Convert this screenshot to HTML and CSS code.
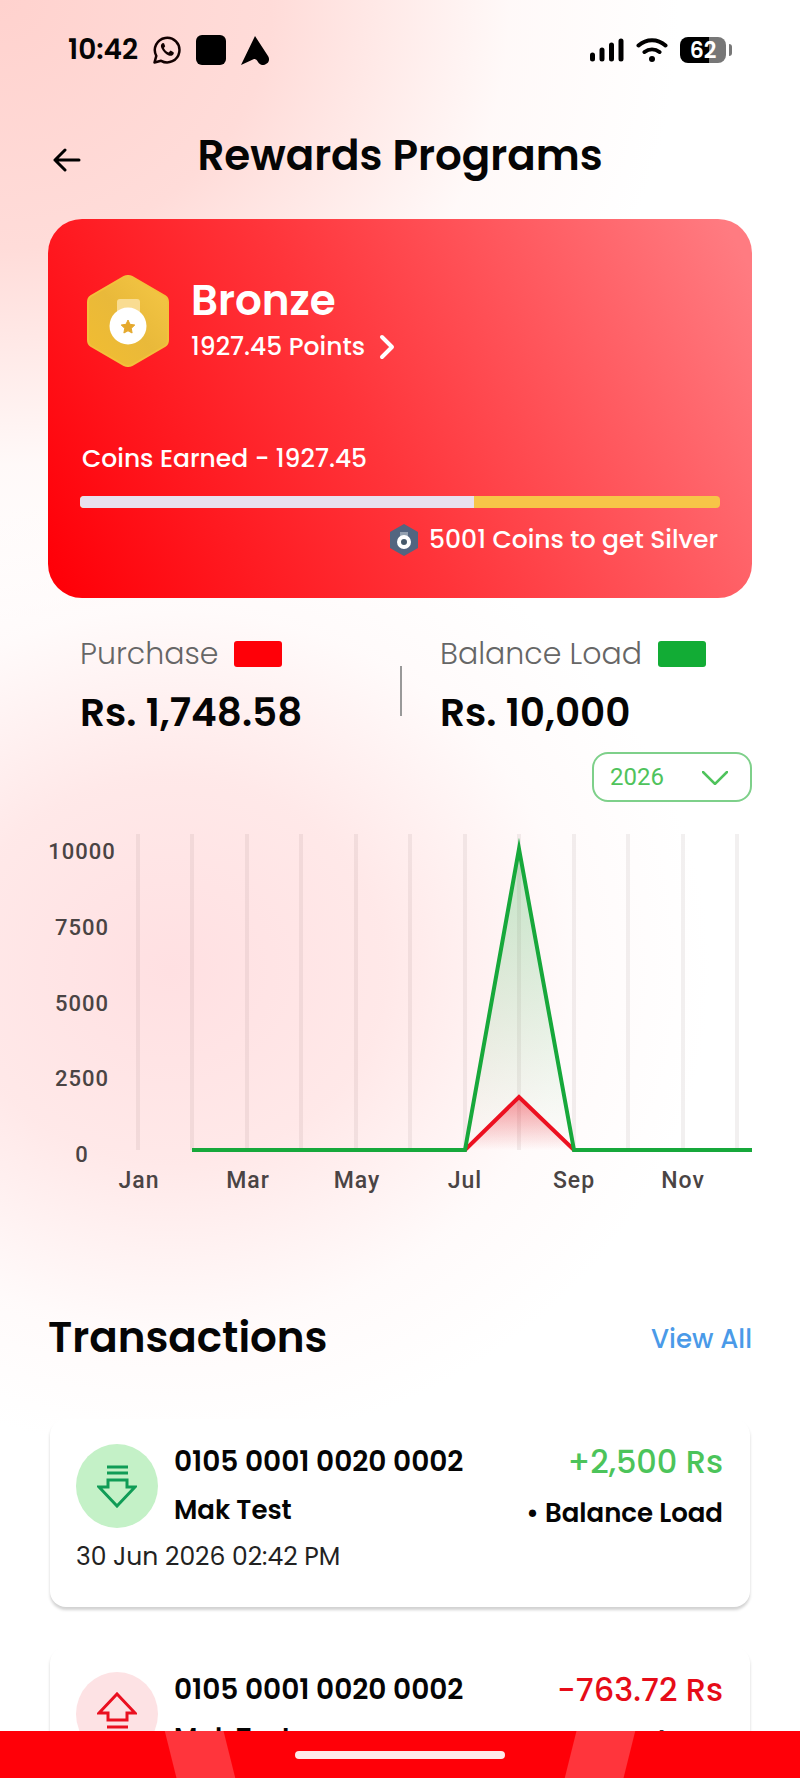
FILE: index.html
```
<!DOCTYPE html>
<html lang="en">
<head>
    <meta charset="UTF-8">
    <meta name="viewport" content="width=device-width, initial-scale=1">
    <title>Rewards Programs</title>
    <link rel="stylesheet" href="styles.css">
</head>
<body>
<div class="screen">
    <div class="status">
        <span class="time">10:42</span>
        <svg width="28" height="28" viewBox="0 0 28 28" fill="none" stroke="#120000" stroke-width="2.500">
            <path d="M1.5 26.500l1.800-6.600a12.300 12.300 0 1 1 4.800 4.900z" stroke-linejoin="round"/>
            <path d="M9.800 7c-2.200 1.200-2.300 3.200-1.300 5.200 1.500 3.200 4 5.700 7.200 7.200 2 .9 4.400.3 5.100-1.900l-.2-1.300-3-1.600-2 1.800c-2.300-.9-3.700-2.300-4.700-4.500l1.300-1.700-1.200-2.900z" fill="#120000" stroke="none"/>
        </svg>
        <span class="square"></span>
        <svg width="28" height="29" viewBox="0 0 28 29">
            <path d="M14 0L0 29l13-6c2 0 3 1 4 3 2 3 5 4 8 2 3-1 4-5 2-8z"/>
        </svg>
        <div class="right">
            <svg width="34" height="24" viewBox="0 0 34 24" stroke="#000" stroke-width="5" stroke-linecap="round">
                <path d="M2.500 17v4M12 12v9M21.500 7v14M31 3v18"/>
            </svg>
            <svg width="32" height="24" viewBox="0 0 32 24" fill="none" stroke="#000" stroke-width="4" stroke-linecap="round">
                <path d="M2.500 7.500c8-7 19-7 27 0M8.500 14c4.500-3.500 10.500-3.500 15 0"/>
                <circle cx="16" cy="21" r="3" fill="#000" stroke="none"/>
            </svg>
            <span class="battery">62</span>
        </div>
    </div>

    <header class="header">
        <button class="back" aria-label="Back">
            <svg width="28" height="24" viewBox="0 0 28 24" fill="none" stroke="#000" stroke-width="3" stroke-linecap="round" stroke-linejoin="round">
                <path d="M26 12H2M12 2L2 12l10 10"/>
            </svg>
        </button>
        <h1>Rewards Programs</h1>
    </header>

    <main class="content">
        <section class="card">
            <div class="level">
                <svg width="82" height="92" viewBox="0 0 82 92">
                    <defs>
                        <linearGradient id="gold" x1="1" y1="0" x2="0" y2="1">
                            <stop offset="0" stop-color="#f5c846"/>
                            <stop offset="0.500" stop-color="#e9b93a"/>
                            <stop offset="1" stop-color="#f2bd30"/>
                        </linearGradient>
                    </defs>
                    <path d="M37 2q4-2 8 0l33 19q3 2 3 6v38q0 4-3 6L45 90q-4 2-8 0L4 71q-3-2-3-6V27q0-4 3-6z" fill="url(#gold)" stroke="#f3c03c" stroke-width="2"/>
                    <path d="M30 27q0-3 3-3h17q3 0 3 3v12H30z" fill="#f9dc91"/>
                    <circle cx="41" cy="51" r="18.500" fill="#fff"/>
                    <path d="M41 45l2 4.300 4.800.7-3.500 3.300.8 4.700-4.100-2.200-4.100 2.200.8-4.700-3.500-3.300 4.800-.7z" fill="#e5a92c" stroke="#e5a92c" stroke-linejoin="round"/>
                </svg>
                <div>
                    <h2>Bronze</h2>
                    <a href="#" class="points">1927.45 Points
                        <svg width="16" height="26" viewBox="0 0 16 26" fill="none" stroke="#fff" stroke-width="4" stroke-linecap="round" stroke-linejoin="round">
                            <path d="M3 3l10 10L3 23"/>
                        </svg>
                    </a>
                </div>
            </div>
            <p class="earned">Coins Earned - 1927.45</p>
            <div class="bar"><div class="fill" style="width: 61.500%"></div></div>
            <p class="next">
                <svg width="30" height="32" viewBox="0 0 30 32">
                    <path d="M15 0l14 8v16l-14 8L1 24V8z" fill="#526580"/>
                    <path d="M11 8h8v6h-8z" fill="#93a0b0"/>
                    <circle cx="15" cy="18" r="5" fill="#45596b" stroke="#fff" stroke-width="4"/>
                </svg>
                5001 Coins to get Silver
            </p>
        </section>

        <section class="totals">
            <div class="total">
                <p class="label">Purchase <span class="swatch red"></span></p>
                <p class="amount">Rs. 1,748.58</p>
            </div>
            <div class="total">
                <p class="label">Balance Load <span class="swatch green"></span></p>
                <p class="amount">Rs. 10,000</p>
            </div>
        </section>

        <div class="filter">
            <select class="year" aria-label="Year">
                <option>2026</option>
                <option>2025</option>
            </select>
            <svg class="arrow" width="26" height="14" viewBox="0 0 26 14" fill="none" stroke="#4fc35c" stroke-width="2.500" stroke-linecap="round">
                <path d="M1 1l12 12L25 1"/>
            </svg>
        </div>

        <svg class="chart" viewBox="0 0 704 370">
            <defs>
                <linearGradient id="greenArea" x1="0" y1="0" x2="0" y2="1">
                    <stop offset="0" stop-color="#12ac35" stop-opacity="0.250"/>
                    <stop offset="1" stop-color="#12ac35" stop-opacity="0"/>
                </linearGradient>
                <linearGradient id="redArea" x1="0" y1="0" x2="0" y2="1">
                    <stop offset="0" stop-color="#f00014" stop-opacity="0.400"/>
                    <stop offset="1" stop-color="#f00014" stop-opacity="0"/>
                </linearGradient>
            </defs>
            <path class="grid" d="M90 0v316M144 0v316M199 0v316M253 0v316M308 0v316M362 0v316M417 0v316M471 0v316M526 0v316M580 0v316M635 0v316M689 0v316"/>
            <path d="M417 316L471 13l55 303z" fill="url(#greenArea)"/>
            <path d="M417 316l54-53 55 53z" fill="url(#redArea)"/>
            <path class="line" stroke="#ec1020" d="M144 316h273l54-53 55 53h178"/>
            <path class="line" stroke="#17a83b" d="M144 316h273L471 15l55 301h178"/>
            <g class="axis">
                <text x="34" y="25">10000</text>
                <text x="34" y="101">7500</text>
                <text x="34" y="177">5000</text>
                <text x="34" y="252">2500</text>
                <text x="34" y="328">0</text>
            </g>
            <g class="axis months">
                <text x="91" y="354">Jan</text>
                <text x="200" y="354">Mar</text>
                <text x="309" y="354">May</text>
                <text x="417" y="354">Jul</text>
                <text x="526" y="354">Sep</text>
                <text x="635" y="354">Nov</text>
            </g>
        </svg>

        <div class="section-head">
            <h2>Transactions</h2>
            <a href="#">View All</a>
        </div>

        <ul class="list">
            <li class="item">
                <span class="icon in">
                    <svg width="40" height="44" viewBox="0 0 40 44" fill="none" stroke="#109c56" stroke-width="3">
                        <path d="M10 3h21M10 9h21M11 16h19v7h8L20 42 2 23h9z"/>
                    </svg>
                </span>
                <div class="who">
                    <p class="number">0105 0001 0020 0002</p>
                    <p class="name">Mak Test</p>
                </div>
                <div class="sum">
                    <p class="value plus">+2,500 Rs</p>
                    <p class="type">• Balance Load</p>
                </div>
                <p class="date">30 Jun 2026 02:42 PM</p>
            </li>
            <li class="item">
                <span class="icon out">
                    <svg width="40" height="44" viewBox="0 0 40 44" fill="none" stroke="#ea1020" stroke-width="3">
                        <path d="M10 41h21M10 35h21M11 28h19v-7h8L20 2 2 21h9z"/>
                    </svg>
                </span>
                <div class="who">
                    <p class="number">0105 0001 0020 0002</p>
                    <p class="name">Mak Test</p>
                </div>
                <div class="sum">
                    <p class="value minus">-763.72 Rs</p>
                    <p class="type">• Purchase</p>
                </div>
            </li>
        </ul>
    </main>

    <footer class="footer"><span class="handle"></span></footer>
</div>
</body>
</html>
```
FILE: styles.css
```
* {
    box-sizing: border-box;
}

body {
    margin: 0;
    font-family: Poppins, Inter, "Open Sans", sans-serif;
    color: #050505;
    background: #fff;
}

h1, h2, p, ul {
    margin: 0;
    padding: 0;
}

h1, h2 {
    font-size: 42px;
    font-weight: 600;
}

a {
    color: inherit;
    text-decoration: none;
}

svg {
    display: block;
    flex: none;
}

.screen {
    height: 100vh;
    display: flex;
    flex-direction: column;
    overflow: hidden;
    background:
        radial-gradient(ellipse 540px 480px at 170px 970px, #ffe0e2 0%, rgba(255, 230, 230, 0.900) 40%, rgba(255, 246, 246, 0.500) 75%, rgba(255, 255, 255, 0) 100%),
        radial-gradient(ellipse 680px 620px at 0 0, #ffd2ce 0%, #ffdcd9 40%, rgba(255, 245, 244, 0.600) 75%, rgba(255, 255, 255, 0) 100%),
        #fff;
}

.status {
    display: flex;
    align-items: center;
    height: 100px;
    padding: 0 74px 0 68px;
    gap: 15px;
}

.time {
    font-size: 28px;
    font-weight: 600;
}

.square {
    width: 30px;
    height: 30px;
    border-radius: 6px;
    background: #000;
}

.right {
    display: flex;
    align-items: center;
    gap: 12px;
    margin-left: auto;
}

.battery {
    position: relative;
    width: 46px;
    height: 26px;
    border-radius: 8px;
    background: linear-gradient(90deg, #000 62%, #777 62%);
    color: #fff;
    font-size: 22px;
    font-weight: 600;
    line-height: 27px;
    text-align: center;
}

.battery::after {
    content: "";
    position: absolute;
    right: -6px;
    top: 7px;
    width: 3px;
    height: 12px;
    border-radius: 0 3px 3px 0;
    background: #777;
}

.header {
    display: grid;
    grid-template-columns: 48px 1fr 48px;
    align-items: center;
    height: 119px;
    padding: 0 48px 8px;
}

.header h1 {
    text-align: center;
}

.back {
    padding: 8px 5px 0;
    border: 0;
    background: none;
    cursor: pointer;
}

.content {
    flex: 1;
    min-height: 0;
    overflow: hidden;
    padding: 0 48px;
}

.card {
    height: 379px;
    padding: 56px 32px 0;
    border-radius: 34px;
    color: #fff;
    background: linear-gradient(62deg, #ff0008 2%, #ff343a 45%, #ff7b81 97%);
}

.level {
    display: flex;
    gap: 22px;
    padding-left: 7px;
}

.level h2 {
    line-height: 52px;
}

.points, .earned, .next {
    font-size: 25px;
    font-weight: 500;
    line-height: 40px;
}

.points {
    display: flex;
    align-items: center;
    gap: 14px;
}

.earned {
    padding: 72px 2px 0;
}

.bar {
    height: 12px;
    margin-top: 17px;
    border-radius: 4px;
    overflow: hidden;
    background: #f7c548;
}

.fill {
    height: 100%;
    background: #e8e0ee;
}

.next {
    display: flex;
    align-items: center;
    justify-content: flex-end;
    gap: 10px;
    padding: 12px 2px 0;
}

.totals {
    display: grid;
    grid-template-columns: 1fr 1fr;
    padding-top: 36px;
}

.total {
    padding-left: 32px;
}

.total + .total {
    padding-left: 40px;
    background: linear-gradient(#999, #999) no-repeat 0 32px / 2px 50px;
}

.label {
    display: flex;
    align-items: center;
    gap: 16px;
    color: #666;
    font-size: 30px;
    font-weight: 300;
    line-height: 40px;
}

.swatch {
    width: 48px;
    height: 26px;
    border-radius: 3px;
}

.red {
    background: #ff0008;
}

.green {
    background: #12ac35;
}

.amount {
    padding-top: 12px;
    font-size: 39px;
    font-weight: 600;
    line-height: 54px;
}

.filter {
    position: relative;
    width: 160px;
    margin: 12px 0 0 auto;
}

.year {
    display: block;
    width: 100%;
    height: 50px;
    padding: 0 16px;
    border: 2px solid #7ed08a;
    border-radius: 16px;
    appearance: none;
    background: #fff;
    color: #4fc35c;
    font: 24px Roboto, sans-serif;
}

.arrow {
    position: absolute;
    right: 24px;
    top: 19px;
    pointer-events: none;
}

.chart {
    width: 100%;
    height: auto;
    margin-top: 32px;
    overflow: visible;
}

.grid {
    fill: none;
    stroke: rgba(90, 60, 60, 0.080);
    stroke-width: 4;
}

.line {
    fill: none;
    stroke-width: 4;
    stroke-miterlimit: 20;
}

.axis {
    font: 500 22px Roboto, sans-serif;
    letter-spacing: 1px;
    fill: #4a4444;
    text-anchor: middle;
}

.months {
    font-size: 23px;
}

.section-head {
    display: flex;
    align-items: center;
    justify-content: space-between;
    padding: 106px 0 53px;
}

.section-head h2 {
    line-height: 56px;
}

.section-head a {
    padding-top: 2px;
    color: #4a9ae8;
    font-size: 26px;
    font-weight: 500;
}

.list {
    display: grid;
    gap: 40px;
    padding: 0 2px;
    list-style: none;
}

.item {
    display: grid;
    grid-template-columns: 82px 1fr auto;
    column-gap: 16px;
    align-content: start;
    height: 188px;
    padding: 25px 27px 0 26px;
    border-radius: 16px;
    background: #fff;
    box-shadow: 0 3px 3px rgba(0, 0, 0, 0.180);
}

.icon {
    display: flex;
    align-items: center;
    justify-content: center;
    width: 82px;
    height: 84px;
    border-radius: 50%;
}

.in {
    background: #c4f1c7;
}

.out {
    background: #fde2e4;
}

.number {
    font-size: 28px;
    font-weight: 600;
    line-height: 36px;
}

.name, .type {
    font-size: 26px;
    font-weight: 600;
    line-height: 60px;
}

.value {
    font-size: 32px;
    font-weight: 500;
    line-height: 36px;
}

.sum {
    display: grid;
    gap: 3px;
    text-align: right;
}

.plus {
    color: #4cc45a;
}

.minus {
    color: #e60c18;
}

.date {
    grid-column: 1 / -1;
    color: #222;
    font-size: 25px;
    line-height: 28px;
}

.footer {
    flex: none;
    height: 47px;
    padding-top: 20px;
    background:
        linear-gradient(76deg, transparent calc(50% - 29px), #ff353c calc(50% - 28px), #ff353c calc(50% + 28px), transparent calc(50% + 29px)) no-repeat left / 50% 100%,
        linear-gradient(104deg, transparent calc(50% - 29px), #ff353c calc(50% - 28px), #ff353c calc(50% + 28px), transparent calc(50% + 29px)) no-repeat right / 50% 100%,
        #ff0008;
}

.handle {
    display: block;
    width: 210px;
    height: 8px;
    margin: 0 auto;
    border-radius: 4px;
    background: #ffe9ea;
}
```
